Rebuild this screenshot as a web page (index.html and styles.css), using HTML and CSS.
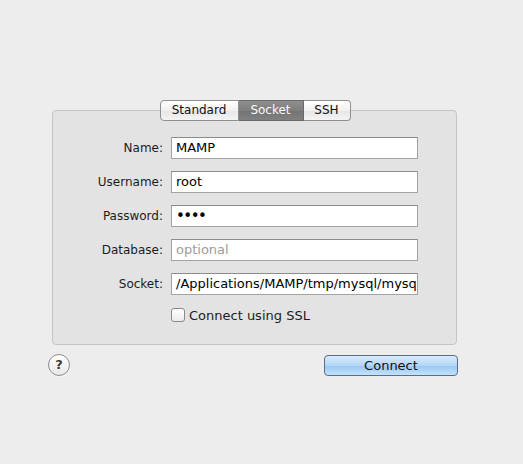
FILE: index.html
```html
<!DOCTYPE html>
<html>
<head>
<meta charset="utf-8">
<link rel="stylesheet" href="styles.css">
</head>
<body>
<div class="sheet">
  <div class="tabs">
    <div class="tab first">Standard</div>
    <div class="tab selected">Socket</div>
    <div class="tab last">SSH</div>
  </div>
  <div class="panel">
    <div class="row"><div class="label">Name:</div><div class="field">MAMP</div></div>
    <div class="row"><div class="label">Username:</div><div class="field">root</div></div>
    <div class="row"><div class="label">Password:</div><div class="field dots">••••</div></div>
    <div class="row"><div class="label">Database:</div><div class="field placeholder">optional</div></div>
    <div class="row"><div class="label">Socket:</div><div class="field">/Applications/MAMP/tmp/mysql/mysql.sock</div></div>
    <div class="row check-row"><div class="label"></div><div class="check"><span class="box"></span><span>Connect using SSL</span></div></div>
  </div>
  <div class="actions">
    <div class="help">?</div>
    <div class="connect">Connect</div>
  </div>
</div>
</body>
</html>
```
FILE: styles.css
```css
html, body {
  margin: 0;
  padding: 0;
  background: #ededed;
  width: 523px;
  height: 464px;
  overflow: hidden;
  font-family: "DejaVu Sans", "Liberation Sans", sans-serif;
  font-size: 12px;
  color: #1a1a1a;
}

.sheet {
  padding: 100px 0 0 52px;
  width: 405px;
}

.tabs {
  display: flex;
  justify-content: center;
  position: relative;
  z-index: 1;
  height: 21px;
  padding-left: 1px;
}

.tab {
  height: 19px;
  line-height: 19px;
  border: 1px solid #8f8f8f;
  border-left: none;
  background: linear-gradient(#ffffff, #f1f1f1 50%, #e6e6e6 51%, #f4f4f4);
  text-align: center;
  color: #111;
}

.tab.first {
  width: 77px;
  border-left: 1px solid #8f8f8f;
  border-radius: 4px 0 0 4px;
}

.tab.selected {
  width: 64px;
  background: linear-gradient(#8e8e8e, #7e7e7e 50%, #737373 51%, #808080);
  border-color: #6a6a6a;
  color: #fafafa;
}

.tab.last {
  width: 46px;
  border-radius: 0 4px 4px 0;
}

.panel {
  margin-top: -11px;
  height: 207px;
  border: 1px solid #c5c5c5;
  border-radius: 4px;
  background: #e3e3e3;
  padding-top: 26px;
  display: flex;
  flex-direction: column;
  gap: 12px;
}

.row {
  display: flex;
  align-items: center;
  gap: 8px;
  height: 22px;
}

.label {
  width: 110px;
  text-align: right;
  color: #1c1c1c;
}

.field {
  width: 239px;
  height: 20px;
  line-height: 20px;
  border: 1px solid #a3a3a3;
  border-top-color: #8d8d8d;
  background: #ffffff;
  padding: 0 2px 0 4px;
  white-space: nowrap;
  overflow: hidden;
  color: #000;
  font-size: 13px;
}

.field.placeholder {
  color: #9c9c9c;
}

.field.dots {
  font-size: 15px;
  letter-spacing: -1.5px;
}

.check-row {
  height: 14px;
  margin-top: 1px;
}

.check {
  display: flex;
  align-items: center;
  gap: 4px;
  color: #1c1c1c;
  font-size: 13px;
}

.box {
  width: 12px;
  height: 12px;
  border: 1px solid #8a8a8a;
  border-radius: 3px;
  background: linear-gradient(#ffffff, #ececec);
}

.actions {
  display: flex;
  justify-content: space-between;
  align-items: center;
  margin-top: 9px;
  margin-left: -4px;
}

.help {
  width: 20px;
  height: 20px;
  border: 1px solid #8c8c8c;
  border-radius: 50%;
  background: linear-gradient(#ffffff, #e8e8e8);
  text-align: center;
  line-height: 20px;
  font-size: 13px;
  font-weight: bold;
  color: #3a3a3a;
  box-shadow: 0 1px 0 rgba(255,255,255,0.6);
}

.connect {
  width: 132px;
  height: 19px;
  line-height: 19px;
  margin-right: -1px;
  border: 1px solid #5b6b88;
  border-radius: 4px;
  background: linear-gradient(#d7eafc, #b4d6f7 50%, #97c6f2 51%, #c3e3fc);
  text-align: center;
  color: #111;
  font-size: 13px;
}
```
